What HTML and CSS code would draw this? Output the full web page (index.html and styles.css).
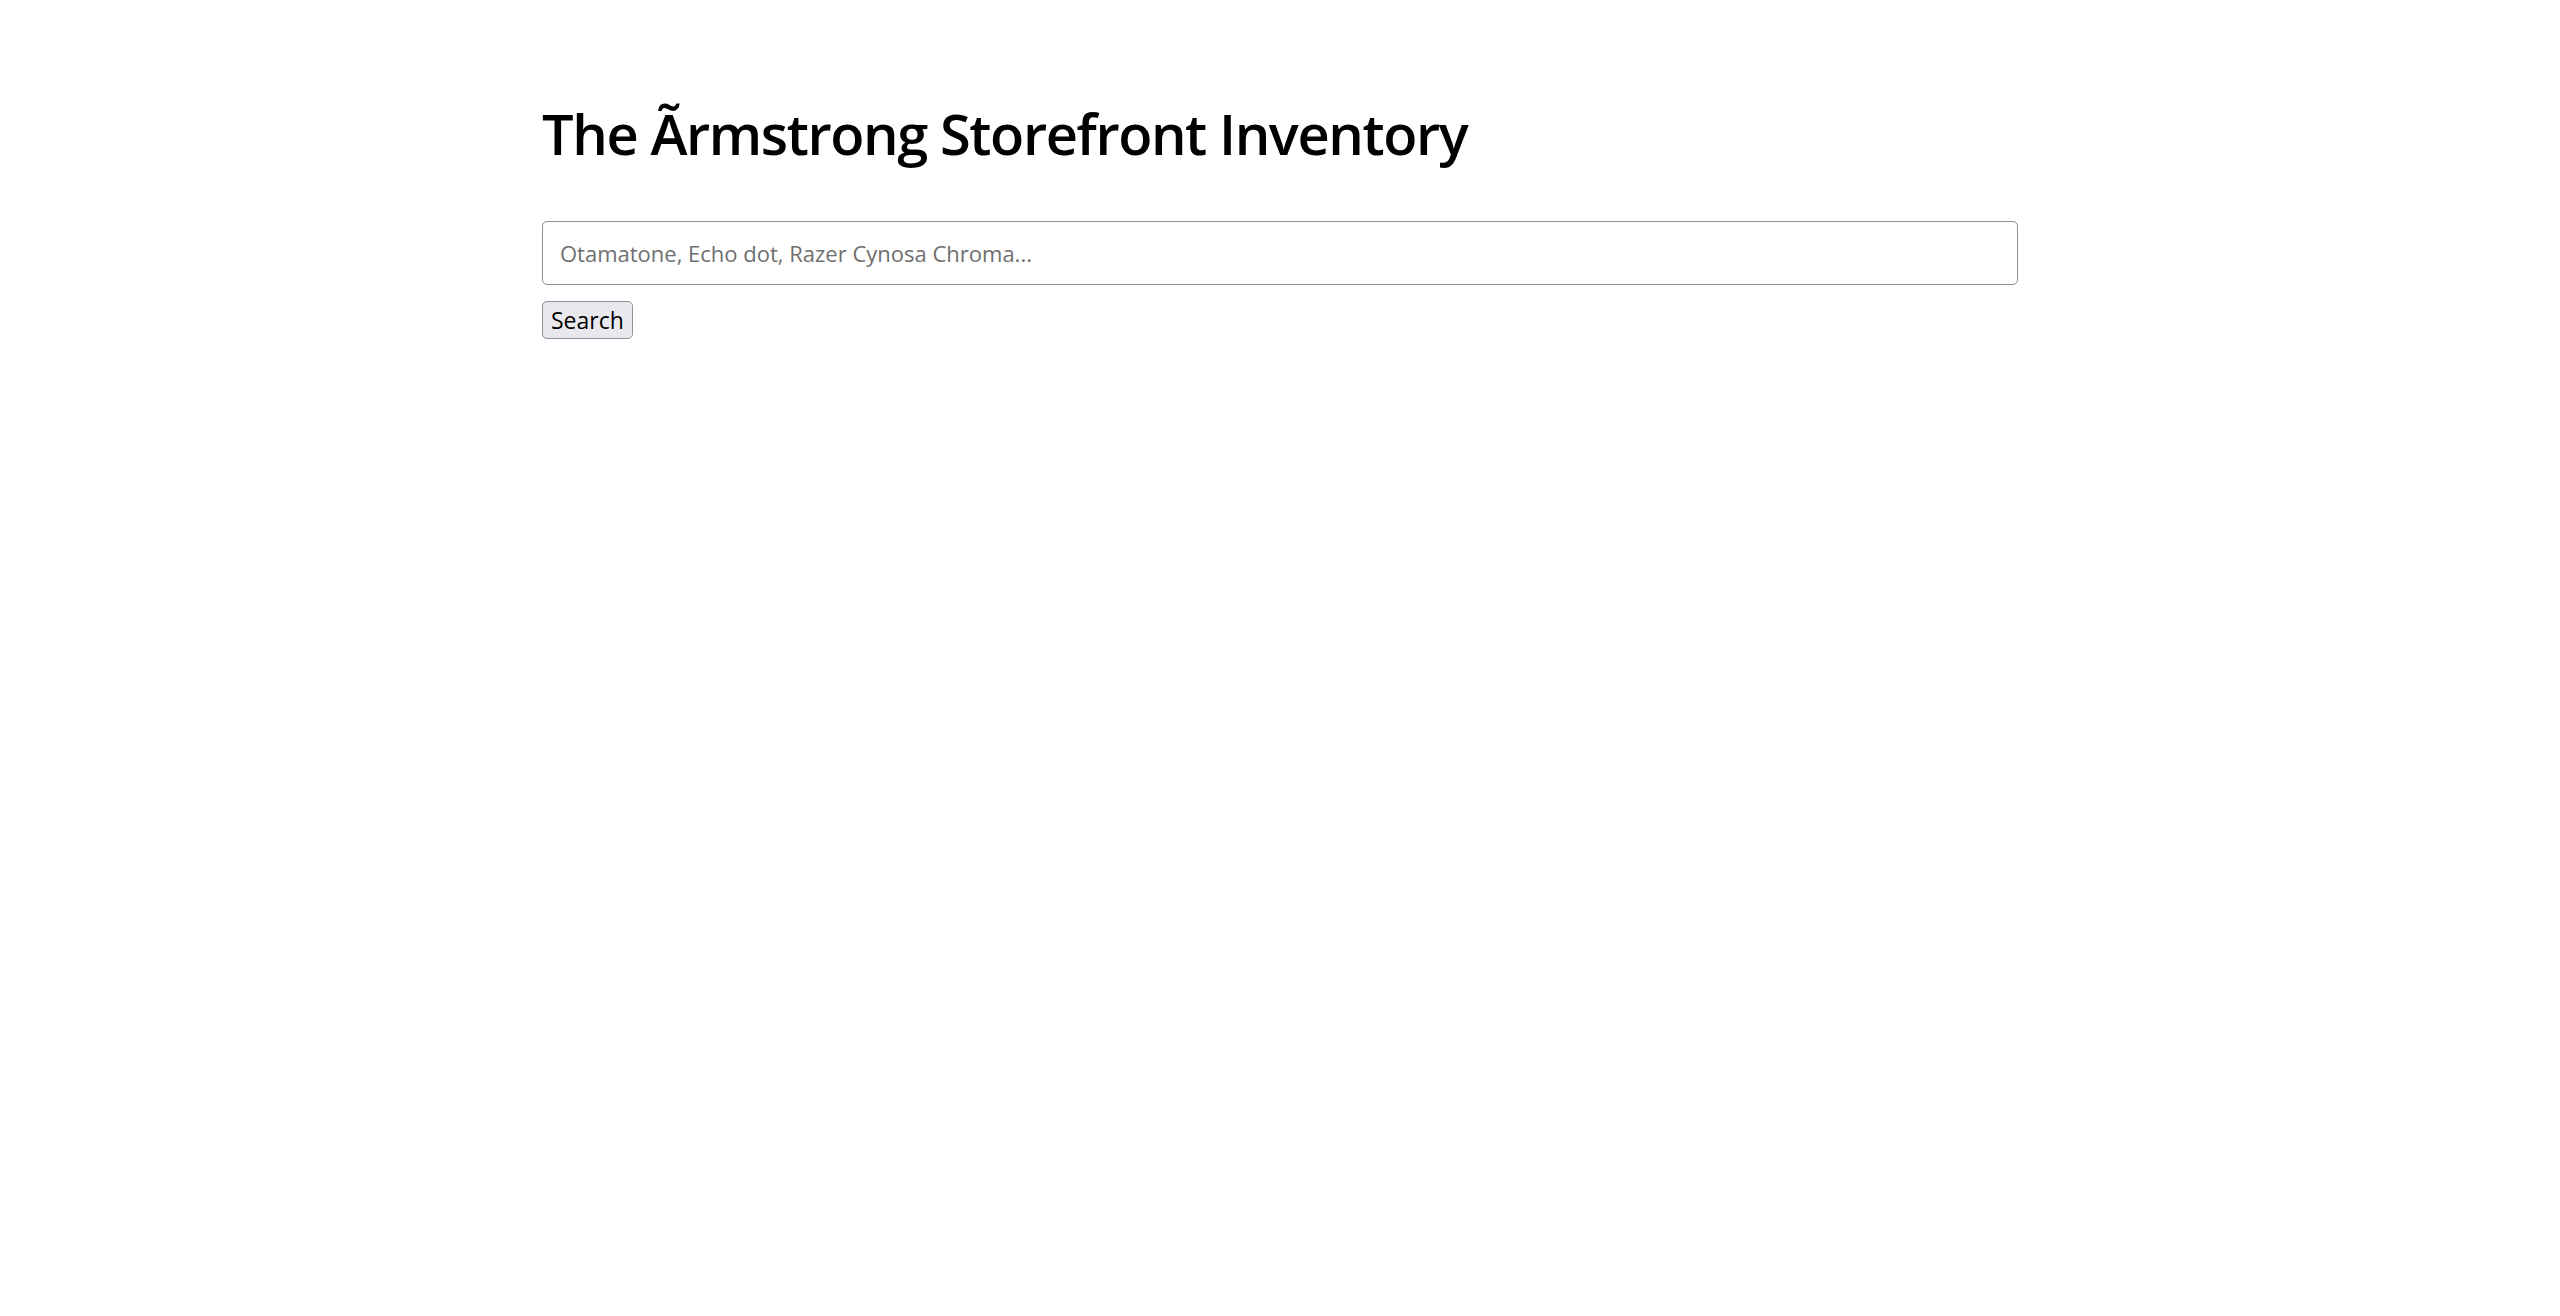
FILE: index.html
```html
<!DOCTYPE html>
<html lang="en">
<head>
<meta charset="utf-8">
<title>The Ãrmstrong Storefront Inventory</title>
<link rel="stylesheet" href="styles.css">
</head>
<body>
<main class="container">
  <h1 class="title">The Ãrmstrong Storefront Inventory</h1>
  <form class="search-form">
    <input class="search-input" type="text" placeholder="Otamatone, Echo dot, Razer Cynosa Chroma...">
    <button class="search-btn" type="button">Search</button>
  </form>
</main>
</body>
</html>
```
FILE: styles.css
```css
html, body {
  margin: 0;
  padding: 0;
  background: #fff;
}
body {
  font-family: "Open Sans", "Noto Sans", sans-serif;
  color: #000;
}
.container {
  width: 1476px;
  margin: 0 auto;
  padding-top: 100px;
}
.title {
  margin: 0 0 54px 0;
  font-family: "Open Sans", sans-serif;
  font-size: 56px;
  font-weight: 600;
  line-height: 1.2;
  letter-spacing: -1.4px;
}
.search-form {
  display: flex;
  flex-direction: column;
  align-items: flex-start;
  gap: 16px;
}
.search-input {
  box-sizing: border-box;
  width: 100%;
  height: 64px;
  padding: 0 17px;
  border: 1.5px solid #8f8f9d;
  border-radius: 5px;
  font-family: "Open Sans", sans-serif;
  font-size: 22px;
  color: #000;
  background: #fff;
}
.search-input::placeholder {
  color: #6f6f6f;
}
.search-btn {
  box-sizing: border-box;
  height: 38px;
  padding: 0 8px;
  border: 1.5px solid #8f8f9d;
  border-radius: 5px;
  background: #e9e9ed;
  font-family: "Open Sans", sans-serif;
  font-size: 23px;
  color: #000;
}
```
